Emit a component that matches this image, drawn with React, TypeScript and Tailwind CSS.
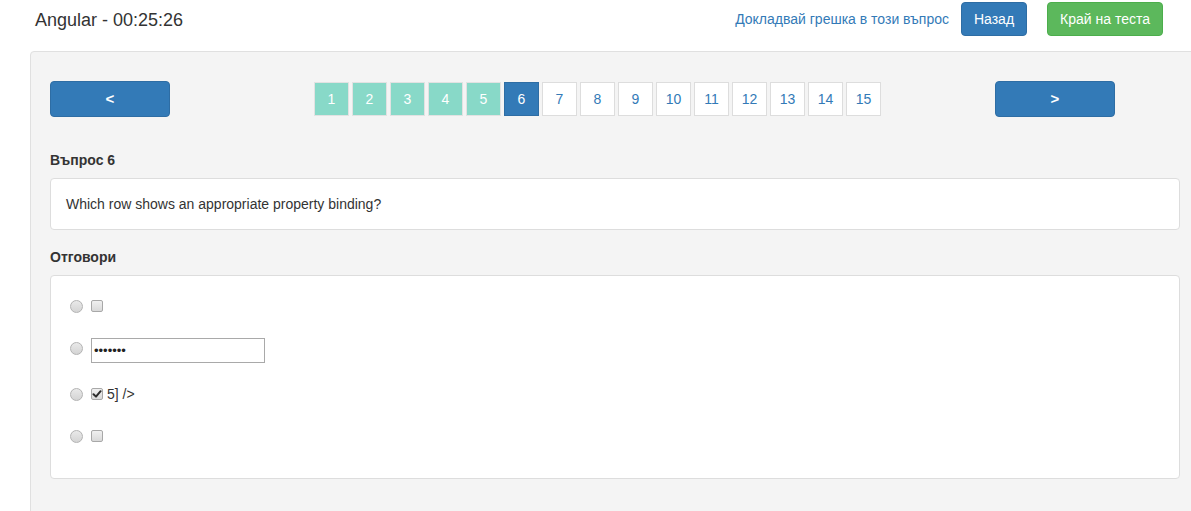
import React from 'react'

const pages = Array.from({ length: 15 }, (_, i) => i + 1)
const current = 6

function Radio() {
  return (
    <span className="block h-[13px] w-[13px] shrink-0 rounded-full border border-[#b3b3b3] bg-gradient-to-b from-[#e9e9e9] to-[#d4d4d4]" />
  )
}

function Checkbox({ checked = false }: { checked?: boolean }) {
  return (
    <span className="flex h-[12px] w-[12px] shrink-0 items-center justify-center rounded-[2px] border border-[#a8a8a8] bg-gradient-to-b from-[#f0f0f0] to-[#d9d9d9]">
      {checked && (
        <svg width="10" height="10" viewBox="0 0 10 10">
          <path d="M1.5 5.2 L4 7.6 L8.6 2.2" fill="none" stroke="#2b2b2b" strokeWidth="2" strokeLinecap="round" strokeLinejoin="round" />
        </svg>
      )}
    </span>
  )
}

function PageBox({ n }: { n: number }) {
  let cls = 'bg-white text-[#337ab7] border-[#ddd]'
  if (n < current) cls = 'bg-[#88d9c8] text-white border-[#e2e2e2]'
  if (n === current) cls = 'bg-[#337ab7] text-white border-[#2e6da4]'
  return (
    <div className={`flex h-[34px] w-[35px] items-center justify-center border text-[14px] ${cls}`}>
      {n}
    </div>
  )
}

export default function App() {
  return (
    <div className="h-screen w-full overflow-hidden bg-white font-['Liberation_Sans',Arial,sans-serif] text-[14px] text-[#333]">
      {/* header */}
      <div className="flex h-[51px] items-start">
        <div className="ml-[35px] mt-[2px] flex h-[36px] items-center text-[18px] text-[#333]">
          Angular - 00:25:26
        </div>
        <div className="ml-auto mr-[28px] mt-[2px] flex h-[34px] items-center">
          <span className="text-[14px] text-[#337ab7]">Докладвай грешка в този въпрос</span>
          <button className="ml-[12px] h-[34px] w-[66px] rounded-[4px] border border-[#2e6da4] bg-[#337ab7] text-[14px] text-white">
            Назад
          </button>
          <button className="ml-[20px] h-[34px] w-[116px] rounded-[4px] border border-[#4cae4c] bg-[#5cb85c] text-[14px] text-white">
            Край на теста
          </button>
        </div>
      </div>

      {/* panel */}
      <div className="ml-[30px] w-[1170px] rounded-[4px] border border-[#e0e0e0] bg-[#f4f4f4] px-[19px] pb-[40px] pt-[29px]">
        <div className="flex h-[36px] items-center">
          <button className="h-[36px] w-[120px] rounded-[4px] border border-[#2e6da4] bg-[#337ab7] text-[15px] font-bold text-white">
            &lt;
          </button>
          <div className="ml-[144px] flex gap-[3px]">
            {pages.map((n) => (
              <PageBox key={n} n={n} />
            ))}
          </div>
          <button className="ml-[114px] h-[36px] w-[120px] rounded-[4px] border border-[#2e6da4] bg-[#337ab7] text-[15px] font-bold text-white">
            &gt;
          </button>
        </div>

        <div className="mt-[33px] h-[20px] font-bold leading-[20px]">Въпрос 6</div>
        <div className="mt-[8px] flex h-[52px] items-center rounded-[4px] border border-[#ddd] bg-white px-[15px]">
          Which row shows an appropriate property binding?
        </div>

        <div className="mt-[17px] h-[20px] font-bold leading-[20px]">Отговори</div>
        <div className="mt-[8px] flex h-[204px] flex-col rounded-[4px] border border-[#ddd] bg-white pl-[19px] pt-[20px]">
          <div className="flex h-[20px] items-center">
            <Radio />
            <span className="ml-[8px]">
              <Checkbox />
            </span>
          </div>
          <div className="mt-[22px] flex h-[25px] items-start">
            <span className="mt-[4px]">
              <Radio />
            </span>
            <div className="ml-[8px] flex h-[25px] w-[174px] items-center border border-[#a9a9a9] bg-white pl-[2px] text-[13px] leading-none text-[#222]">
              •••••••
            </div>
          </div>
          <div className="mt-[21px] flex h-[20px] items-center">
            <Radio />
            <span className="ml-[8px]">
              <Checkbox checked />
            </span>
            <span className="ml-[4px]">5] /&gt;</span>
          </div>
          <div className="mt-[22px] flex h-[20px] items-center">
            <Radio />
            <span className="ml-[8px]">
              <Checkbox />
            </span>
          </div>
        </div>
      </div>
    </div>
  )
}
